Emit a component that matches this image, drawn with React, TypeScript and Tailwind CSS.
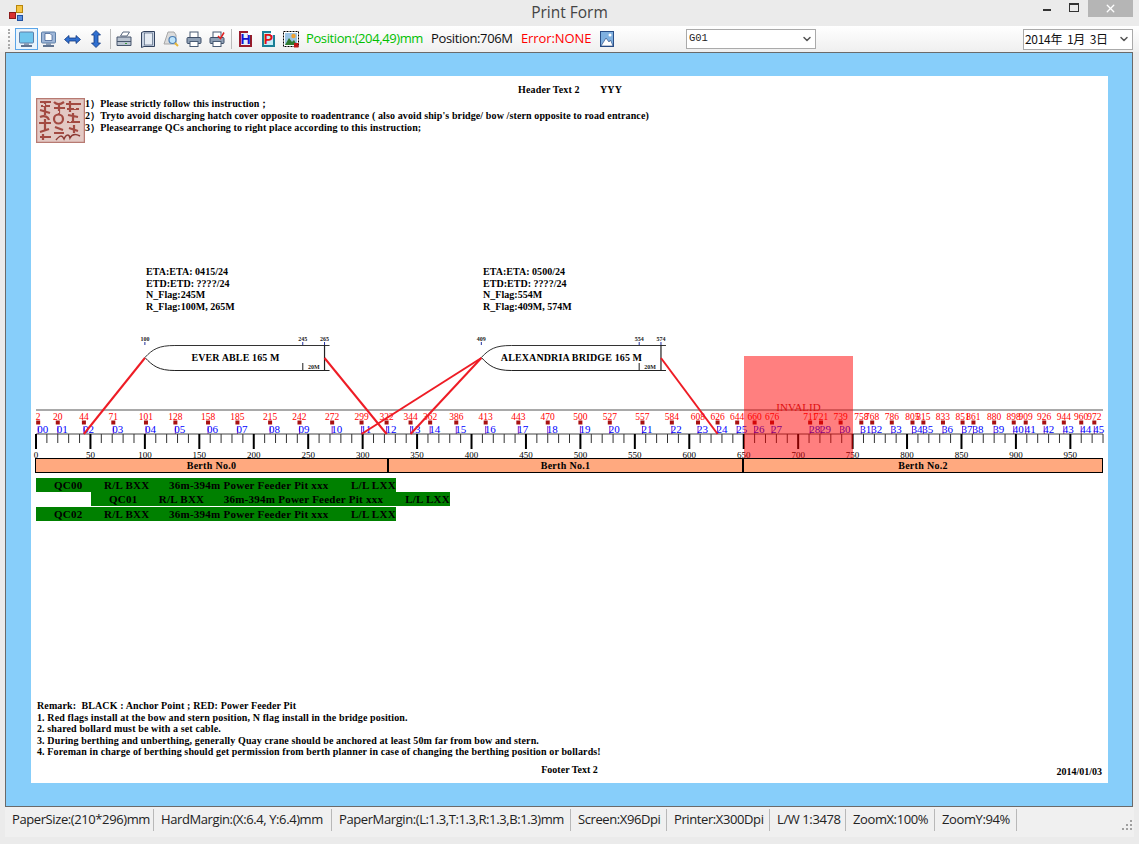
import React from 'react';
import { ChevronDown, X } from 'lucide-react';

const scale = 1.0888;
const toX = (m: number) => 36 + m * scale;

const flags = [2, 20, 44, 71, 101, 128, 158, 185, 215, 242, 272, 299, 322, 344, 362, 386, 413, 443, 470, 500, 527, 557, 584, 608, 626, 644, 660, 676, 711, 721, 739, 758, 768, 786, 805, 815, 833, 851, 861, 880, 898, 909, 926, 944, 960, 972];
const ticks = Array.from({ length: 99 }, (_, i) => i * 10);

const ships = [
  { name: 'EVER ABLE 165 M', bow: 100, bridge: 245, stern: 265, x: 235.5, lines: [44, 322] },
  { name: 'ALEXANDRIA BRIDGE 165 M', bow: 409, bridge: 554, stern: 574, x: 571.5, lines: [299, 344, 626] },
];

const statusItems = [
  { text: 'PaperSize:(210*296)mm', w: 'w-[149px]' },
  { text: 'HardMargin:(X:6.4, Y:6.4)mm', w: 'w-[178px]' },
  { text: 'PaperMargin:(L:1.3,T:1.3,R:1.3,B:1.3)mm', w: 'w-[239px]' },
  { text: 'Screen:X96Dpi', w: 'w-[96px]' },
  { text: 'Printer:X300Dpi', w: 'w-[103px]' },
  { text: 'L/W 1:3478', w: 'w-[76px]' },
  { text: 'ZoomX:100%', w: 'w-[89px]' },
  { text: 'ZoomY:94%', w: 'w-[82px]' },
];

const remarks = [
  'Remark:  BLACK : Anchor Point ; RED: Power Feeder Pit',
  '1. Red flags install at the bow and stern position, N flag install in the bridge position.',
  '2. shared bollard must be with a set cable.',
  '3. During berthing and unberthing, generally Quay crane should be anchored at least 50m far from bow and stern.',
  '4. Foreman in charge of berthing should get permission from berth planner in case of changing the berthing position or bollards!',
];

function Monitor({ page }: { page?: boolean }) {
  return (
    <svg width="17" height="17" viewBox="0 0 17 17">
      <rect x="1.5" y="1" width="14" height="11" rx="1" fill={page ? '#9fb7d8' : '#6fc6ee'} stroke="#5d7fa8" />
      {page && <path d="M5 2.5h5l2 2v5H5z" fill="#fff" stroke="#33548a" strokeWidth="0.7" />}
      <rect x="6" y="12" width="5" height="2" fill="#8a9cb5" />
      <rect x="3" y="14" width="11" height="2" fill="#5f7391" />
    </svg>
  );
}

function ArrowH() {
  return (
    <svg width="17" height="17" viewBox="0 0 17 17">
      <path d="M0.5 8.5 5 4.5V7h7V4.5l4.500 4-4.500 4V10H5v2.500z" fill="#2f6fd0" stroke="#12377f" strokeWidth="0.8" />
    </svg>
  );
}

function ArrowV() {
  return (
    <svg width="12" height="18" viewBox="0 0 12 18">
      <path d="M6 0.500 10.500 5H8v8h2.500L6 17.500 1.500 13H4V5H1.500z" fill="#2f6fd0" stroke="#12377f" strokeWidth="0.8" />
    </svg>
  );
}

function Printer({ check }: { check?: boolean }) {
  return (
    <svg width="16" height="17" viewBox="0 0 16 17">
      <rect x="4" y="1" width="8" height="6" fill="#fff" stroke="#4a5c75" />
      <rect x="1" y="6.500" width="14" height="6" rx="1" fill="#8fa0b5" stroke="#3f4f68" />
      <rect x="4" y="10.500" width="8" height="5" fill="#fff" stroke="#4a5c75" />
      {check && <path d="M9 5 11.500 7.500 15 1.500" fill="none" stroke="#e02020" strokeWidth="1.500" />}
    </svg>
  );
}

function SidePrinter() {
  return (
    <svg width="16" height="17" viewBox="0 0 16 17">
      <path d="M4.500 5 7 1h6.500L11 5z" fill="#fff" stroke="#5a6a80" />
      <path d="M1 6h14v8.500H1z" fill="#b9c3d0" stroke="#46556c" />
      <path d="M1 10.500h14" stroke="#46556c" />
      <rect x="9" y="12" width="2" height="1" fill="#3a9a3a" />
    </svg>
  );
}

function PageIcon() {
  return (
    <svg width="14" height="17" viewBox="0 0 14 17">
      <path d="M0.500 1.500 3 0.500h10.500v15H3l-2.500 1z" fill="#c7d2e2" stroke="#33435f" />
      <rect x="3.500" y="2" width="8" height="12" fill="#e6ecf4" stroke="#55657f" strokeWidth="0.7" />
    </svg>
  );
}

function PreviewIcon() {
  return (
    <svg width="16" height="17" viewBox="0 0 16 17">
      <path d="M1 13 5 1h6l2 3v9z" fill="#dcdcdc" stroke="#a8a8a8" />
      <circle cx="9.500" cy="9" r="3.500" fill="#bfe4fa" stroke="#4d7fb5" strokeWidth="1.200" />
      <path d="M12 12 15 15" stroke="#e8b838" strokeWidth="2" />
    </svg>
  );
}

function LetterBadge({ letter, blue }: { letter: string; blue: boolean }) {
  return (
    <div className={`relative flex h-[16px] w-[13px] items-center justify-center border-2 font-['Liberation_Sans',sans-serif] text-[14px] font-bold leading-none ${blue ? 'border-[#9a1c2c] bg-[#e4f0fb] text-[#1414d0]' : 'border-[#1a7f96] bg-[#c4eef8] text-[#e01010]'}`}>
      {letter}
      <div className="absolute -right-[2px] -top-[2px] h-[4px] w-[4px] bg-white" />
    </div>
  );
}

function PictureIcon() {
  return (
    <svg width="16" height="17" viewBox="0 0 16 17">
      <rect x="0.500" y="0.500" width="15" height="15" fill="#fff" stroke="#000" strokeDasharray="2 1" />
      <rect x="2" y="2" width="12" height="12" fill="#9cc4e4" />
      <path d="M2 14 6 7l3 4 2-2 3 5z" fill="#2f7a2f" />
      <circle cx="10.500" cy="5" r="2.200" fill="#f0a030" />
      <rect x="11" y="12" width="4.500" height="4.500" fill="#c01818" />
    </svg>
  );
}

function LandscapeIcon() {
  return (
    <svg width="14" height="16" viewBox="0 0 14 16">
      <rect x="0.500" y="0.500" width="13" height="15" fill="#7fb0e0" stroke="#2a4f88" />
      <path d="M1 15 6 7l3 4 1.500-2L13 15z" fill="#fff" stroke="#1f3f78" strokeWidth="0.6" />
      <circle cx="10" cy="4" r="1.500" fill="#fff" />
    </svg>
  );
}

// hand drawn approximation of the seal next to the instructions
function Seal() {
  return (
    <svg width="49" height="45" viewBox="0 0 49 45" className="shrink-0">
      <rect x="0" y="0" width="49" height="45" fill="#e3c9c4" />
      <path d="M0.500 0.500h48v44h-48z" fill="none" stroke="#b77a72" strokeWidth="1.500" />
      <g fill="none" stroke="#a34a42" strokeWidth="2.200">
        <path d="M4 4h11M5 8h9M4 12l10 3M9 3v14M4 19c5-2 8 0 9 3M3 25h12M9 21v11M4 34l9-3M4 39h11M7 36v6" />
        <path d="M18 4c3 3 6 3 10 0M18 10h11M23 6v11M18 21a4.500 4.500 0 1 0 9 0 4.500 4.500 0 1 0-9 0M19 29l8 3M18 35h10" />
        <path d="M34 3v11M30 6h15M31 11h12M32 17l10 2M37 15v10M31 24h13M33 30l9 3M38 27v8" />
      </g>
      <path d="M20 42c4-5 6-5 8-1 2-5 5-5 6-1 2-4 6-4 10-2" fill="none" stroke="#8c3a33" strokeWidth="1.500" />
      <g fill="#e3c9c4">
        <rect x="7" y="6" width="2" height="2" />
        <rect x="21" y="13" width="2" height="2" />
        <rect x="38" y="9" width="2" height="2" />
        <rect x="11" y="27" width="2" height="2" />
        <rect x="33" y="22" width="2" height="2" />
      </g>
    </svg>
  );
}

function Ship({ name, bow, bridge, stern, x }: { name: string; bow: number; bridge: number; stern: number; x: number }) {
  const bowX = toX(bow);
  const bridgeX = toX(bridge);
  const sternX = toX(stern);
  return (
    <g>
      <path d={`M${bowX} 357.500 C${bowX + 8} 349 ${bowX + 14} 345.500 ${bowX + 30} 345.500 L${sternX + 5} 345.500`} fill="none" stroke="#333" />
      <path d={`M${bowX} 357.500 C${bowX + 8} 366 ${bowX + 14} 370.500 ${bowX + 30} 370.500 L${sternX + 5} 370.500`} fill="none" stroke="#222" />
      <path d={`M${sternX} 345v25`} stroke="#222" strokeWidth="1.200" />
      <path d={`M${bridgeX} 363v7`} stroke="#444" strokeWidth="1.200" />
      <path d={`M${bowX} 342v3M${bridgeX} 342v3M${sternX} 342v3`} stroke="#2030a0" />
      <text x={x} y="361" textAnchor="middle" className="text-[10px] font-bold tracking-[0.12px]" fill="#000">{name}</text>
      <text x={bridgeX + 11} y="368.500" textAnchor="middle" className="text-[6px]" fill="#222">20M</text>
      <text x={bowX} y="341" textAnchor="middle" className="text-[6px]" fill="#222">{bow}</text>
      <text x={bridgeX} y="341" textAnchor="middle" className="text-[6px]" fill="#222">{bridge}</text>
      <text x={sternX} y="341" textAnchor="middle" className="text-[6px]" fill="#222">{stern}</text>
    </g>
  );
}

function QcRow({ id, offset }: { id: string; offset: string }) {
  return (
    <div className={`flex h-[14px] items-center bg-[#008000] text-[11px] font-bold tracking-[0.25px] whitespace-pre text-black ${offset}`}>
      <span className="w-[68px] pl-[18px]">{id}</span>
      <span className="w-[65px]">R/L BXX</span>
      <span className="w-[182px]">36m-394m Power Feeder Pit xxx</span>
      <span>L/L LXX</span>
    </div>
  );
}

export default function App() {
  return (
    <div className="flex h-[844px] w-[1139px] flex-col overflow-hidden bg-[#ebebeb] font-['Open_Sans',sans-serif]">
      {/* title bar */}
      <div className="relative flex h-[26px] shrink-0 items-start justify-center">
        <div className="absolute left-[9px] top-[5px] h-[16px] w-[14px]">
          <div className="absolute right-0 top-0 h-[8px] w-[7px] border border-[#b8860b] bg-[#f5c542]" />
          <div className="absolute bottom-[2px] left-0 h-[7px] w-[7px] border border-[#8b1a1a] bg-[#d83030]" />
          <div className="absolute bottom-0 right-0 h-[6px] w-[6px] border border-[#2050a0] bg-[#5a90e0]" />
        </div>
        <span className="mt-[2px] text-[15.5px] leading-[20px] text-[#444]">Print Form</span>
        <div className="absolute right-[6px] top-0 flex h-[17px] items-start">
          <div className="mr-[18px] mt-[9px] h-[2px] w-[8px] bg-[#333]" />
          <div className="mr-[9px] mt-[3px] h-[9px] w-[10px] border border-t-2 border-[#333]" />
          <div className="flex h-[17px] w-[45px] items-center justify-center bg-[#b5b5b5] text-white">
            <X size={13} strokeWidth={2.5} />
          </div>
        </div>
      </div>

      {/* toolbar */}
      <div className="flex h-[26px] shrink-0 items-center bg-gradient-to-b from-white to-[#efefef] pl-[8px] text-[13px]">
        <div className="mr-[5px] h-[20px] w-[2px] border-l-2 border-dotted border-[#aaa]" />
        <div className="flex h-[22px] w-[23px] items-center justify-center border border-[#5aa5e8] bg-[#eaf4fc]"><Monitor /></div>
        <div className="ml-[2px] flex w-[17px] justify-center"><Monitor page /></div>
        <div className="ml-[7px] flex w-[17px] justify-center"><ArrowH /></div>
        <div className="ml-[9px] flex w-[12px] justify-center"><ArrowV /></div>
        <div className="ml-[8px] mr-[5px] h-[20px] w-px bg-[#bbb]" />
        <SidePrinter />
        <div className="ml-[9px]"><PageIcon /></div>
        <div className="ml-[8px]"><PreviewIcon /></div>
        <div className="ml-[7px]"><Printer /></div>
        <div className="ml-[7px]"><Printer check /></div>
        <div className="ml-[6px] mr-[7px] h-[20px] w-px bg-[#bbb]" />
        <LetterBadge letter="H" blue />
        <div className="ml-[10px]"><LetterBadge letter="P" blue={false} /></div>
        <div className="ml-[8px]"><PictureIcon /></div>
        <span className="ml-[7px] w-[125px] whitespace-nowrap tracking-[-0.4px] text-[#00c000]">Position:(204,49)mm</span>
        <span className="w-[90px] whitespace-nowrap tracking-[-0.35px] text-[#111]">Position:706M</span>
        <span className="w-[79px] whitespace-nowrap tracking-[-0.1px] text-[#ff0000]">Error:NONE</span>
        <LandscapeIcon />
        <div className="ml-[72px] flex h-[20px] w-[130px] items-center justify-between border border-[#aaa] bg-white pl-[2px] pr-[2px] font-['Liberation_Mono',monospace] text-[10.5px] text-[#222]">
          <span>G01</span>
          <ChevronDown size={12} strokeWidth={3} className="text-[#555]" />
        </div>
        <div className="ml-[207px] flex h-[21px] w-[110px] items-center justify-between border border-[#aaa] bg-white pl-[1px] pr-[2px] font-['Noto_Sans_CJK_SC',sans-serif] text-[12px] tracking-[-0.3px] whitespace-pre text-[#111]">
          <span>2014年  1月  3日</span>
          <ChevronDown size={12} strokeWidth={3} className="text-[#555]" />
        </div>
      </div>

      {/* preview area */}
      <div className="ml-[5px] mr-[6px] h-[755px] shrink-0 border border-[#6a6a6a] bg-[#87cefa] px-[25px] pb-[23px] pt-[23px]">
        <div className="flex h-[707px] w-[1077px] flex-col bg-white pl-[5px] font-['Liberation_Serif',serif] text-[10px] font-bold leading-[12px] text-black">
          <div className="flex h-[22px] shrink-0 items-end pb-[2px] pl-[482px] whitespace-pre tracking-[0.15px]">
            <span className="w-[82px]">Header Text 2</span>
            <span>YYY</span>
          </div>
          <div className="flex h-[162px] shrink-0">
            <Seal />
            <div className="tracking-[0.11px] whitespace-pre">
              <div>1）Please strictly follow this instruction；</div>
              <div>2）Tryto avoid discharging hatch cover opposite to roadentrance ( also avoid ship's bridge/ bow /stern opposite to road entrance)</div>
              <div>3）Pleasearrange QCs anchoring to right place according to this instruction;</div>
            </div>
          </div>

          {/* ships and ruler: free canvas, page coordinates in the svg viewBox */}
          <div className="relative -ml-[5px] h-[198px] w-[1077px] shrink-0">
            <svg width="1077" height="198" viewBox="31 260 1077 198" className="absolute inset-0 overflow-visible font-['Liberation_Serif',serif]">
              <path d="M36 410H1103" stroke="#555" strokeWidth="1.200" />
              {flags.map((f, i) => (
                <g key={f}>
                  <text x={toX(f)} y="420" textAnchor="middle" className="text-[9.5px] font-normal" fill="#ff0000">{f}</text>
                  <rect x={toX(f) - 2} y="420.500" width="4" height="4" fill="#a81010" />
                  <path d={`M${toX(f)} 426v8`} stroke="#8030c0" />
                  <text x={toX(f) - 1} y="433" className="text-[11px] font-normal" fill="#0000ff">{String(i).padStart(2, '0')}</text>
                </g>
              ))}
              <path d="M36 434H1103" stroke="#444" />
              {ticks.map((m) => (
                <path key={m} d={`M${toX(m)} 434v${m % 50 === 0 ? 15 : 9}`} stroke={m % 50 === 0 ? '#000' : '#333'} strokeWidth={m % 50 === 0 ? 2 : 1} />
              ))}
              {ticks.filter((m) => m % 50 === 0 && m < 980).map((m) => (
                <text key={m} x={toX(m)} y="458" textAnchor="middle" className="text-[9px] font-normal" fill="#000">{m}</text>
              ))}
              {ships.map((s) => (
                <Ship key={s.name} name={s.name} bow={s.bow} bridge={s.bridge} stern={s.stern} x={s.x} />
              ))}
              {ships.map((s) =>
                s.lines.map((m) => {
                  const from = m > s.stern ? toX(s.stern) : toX(s.bow);
                  return <path key={`${s.name}${m}`} d={`M${from} 358 L${toX(m)} 434`} stroke="#ee1c25" strokeWidth="2" fill="none" />;
                }),
              )}
            </svg>
            <div className="absolute left-[115px] top-[6px] leading-[11.700px] tracking-[0.03px]">
              <div>ETA:ETA: 0415/24</div>
              <div>ETD:ETD: ????/24</div>
              <div>N_Flag:245M</div>
              <div>R_Flag:100M, 265M</div>
            </div>
            <div className="absolute left-[452px] top-[6px] leading-[11.700px] tracking-[0.03px]">
              <div>ETA:ETA: 0500/24</div>
              <div>ETD:ETD: ????/24</div>
              <div>N_Flag:554M</div>
              <div>R_Flag:409M, 574M</div>
            </div>
            <div className="absolute bottom-0 left-[713px] top-[96px] flex w-[109px] justify-center bg-[#ff0000]/50 pt-[45px] text-[11px] font-normal text-[#e01010]">INVALID</div>
          </div>

          <div className="-ml-[1px] flex h-[15px] w-[1068px] shrink-0 border border-black bg-[#ffa97f] text-center text-[10px] leading-[13px] tracking-[0.3px]">
            <div className="w-[353px] border-r-2 border-black">Berth No.0</div>
            <div className="w-[355px] border-r-2 border-black">Berth No.1</div>
            <div className="flex-1">Berth No.2</div>
          </div>

          <div className="mt-[5px] flex shrink-0 flex-col">
            <QcRow id="QC00" offset="w-[360px]" />
            <QcRow id="QC01" offset="ml-[55px] w-[359px]" />
            <QcRow id="QC02" offset="mt-[1px] w-[360px]" />
          </div>

          <div className="mt-auto pl-[1px] leading-[11.600px] tracking-[0.12px] whitespace-pre">
            {remarks.map((r) => (
              <div key={r}>{r}</div>
            ))}
          </div>
          <div className="relative mb-[2px] mt-[6px] flex h-[17px] shrink-0 justify-center pr-[5px]">
            <span>Footer Text 2</span>
            <span className="absolute right-[6px] top-[2px]">2014/01/03</span>
          </div>
        </div>
      </div>

      {/* status bar */}
      <div className="relative mx-[5px] flex h-[30px] shrink-0 items-center bg-[#f0f0f0] pb-[4px] text-[13px] text-[#222]">
        {statusItems.map((s) => (
          <div key={s.text} className={`flex h-[22px] shrink-0 items-center overflow-hidden whitespace-nowrap border-r border-[#b8b8b8] pl-[7px] tracking-[-0.4px] ${s.w}`}>
            {s.text}
          </div>
        ))}
        <svg width="12" height="12" viewBox="0 0 12 12" className="absolute bottom-[5px] right-0">
          <g fill="#a0a0a0">
            <rect x="8" y="0" width="2" height="2" />
            <rect x="4" y="4" width="2" height="2" />
            <rect x="8" y="4" width="2" height="2" />
            <rect x="0" y="8" width="2" height="2" />
            <rect x="4" y="8" width="2" height="2" />
            <rect x="8" y="8" width="2" height="2" />
          </g>
        </svg>
      </div>
    </div>
  );
}
